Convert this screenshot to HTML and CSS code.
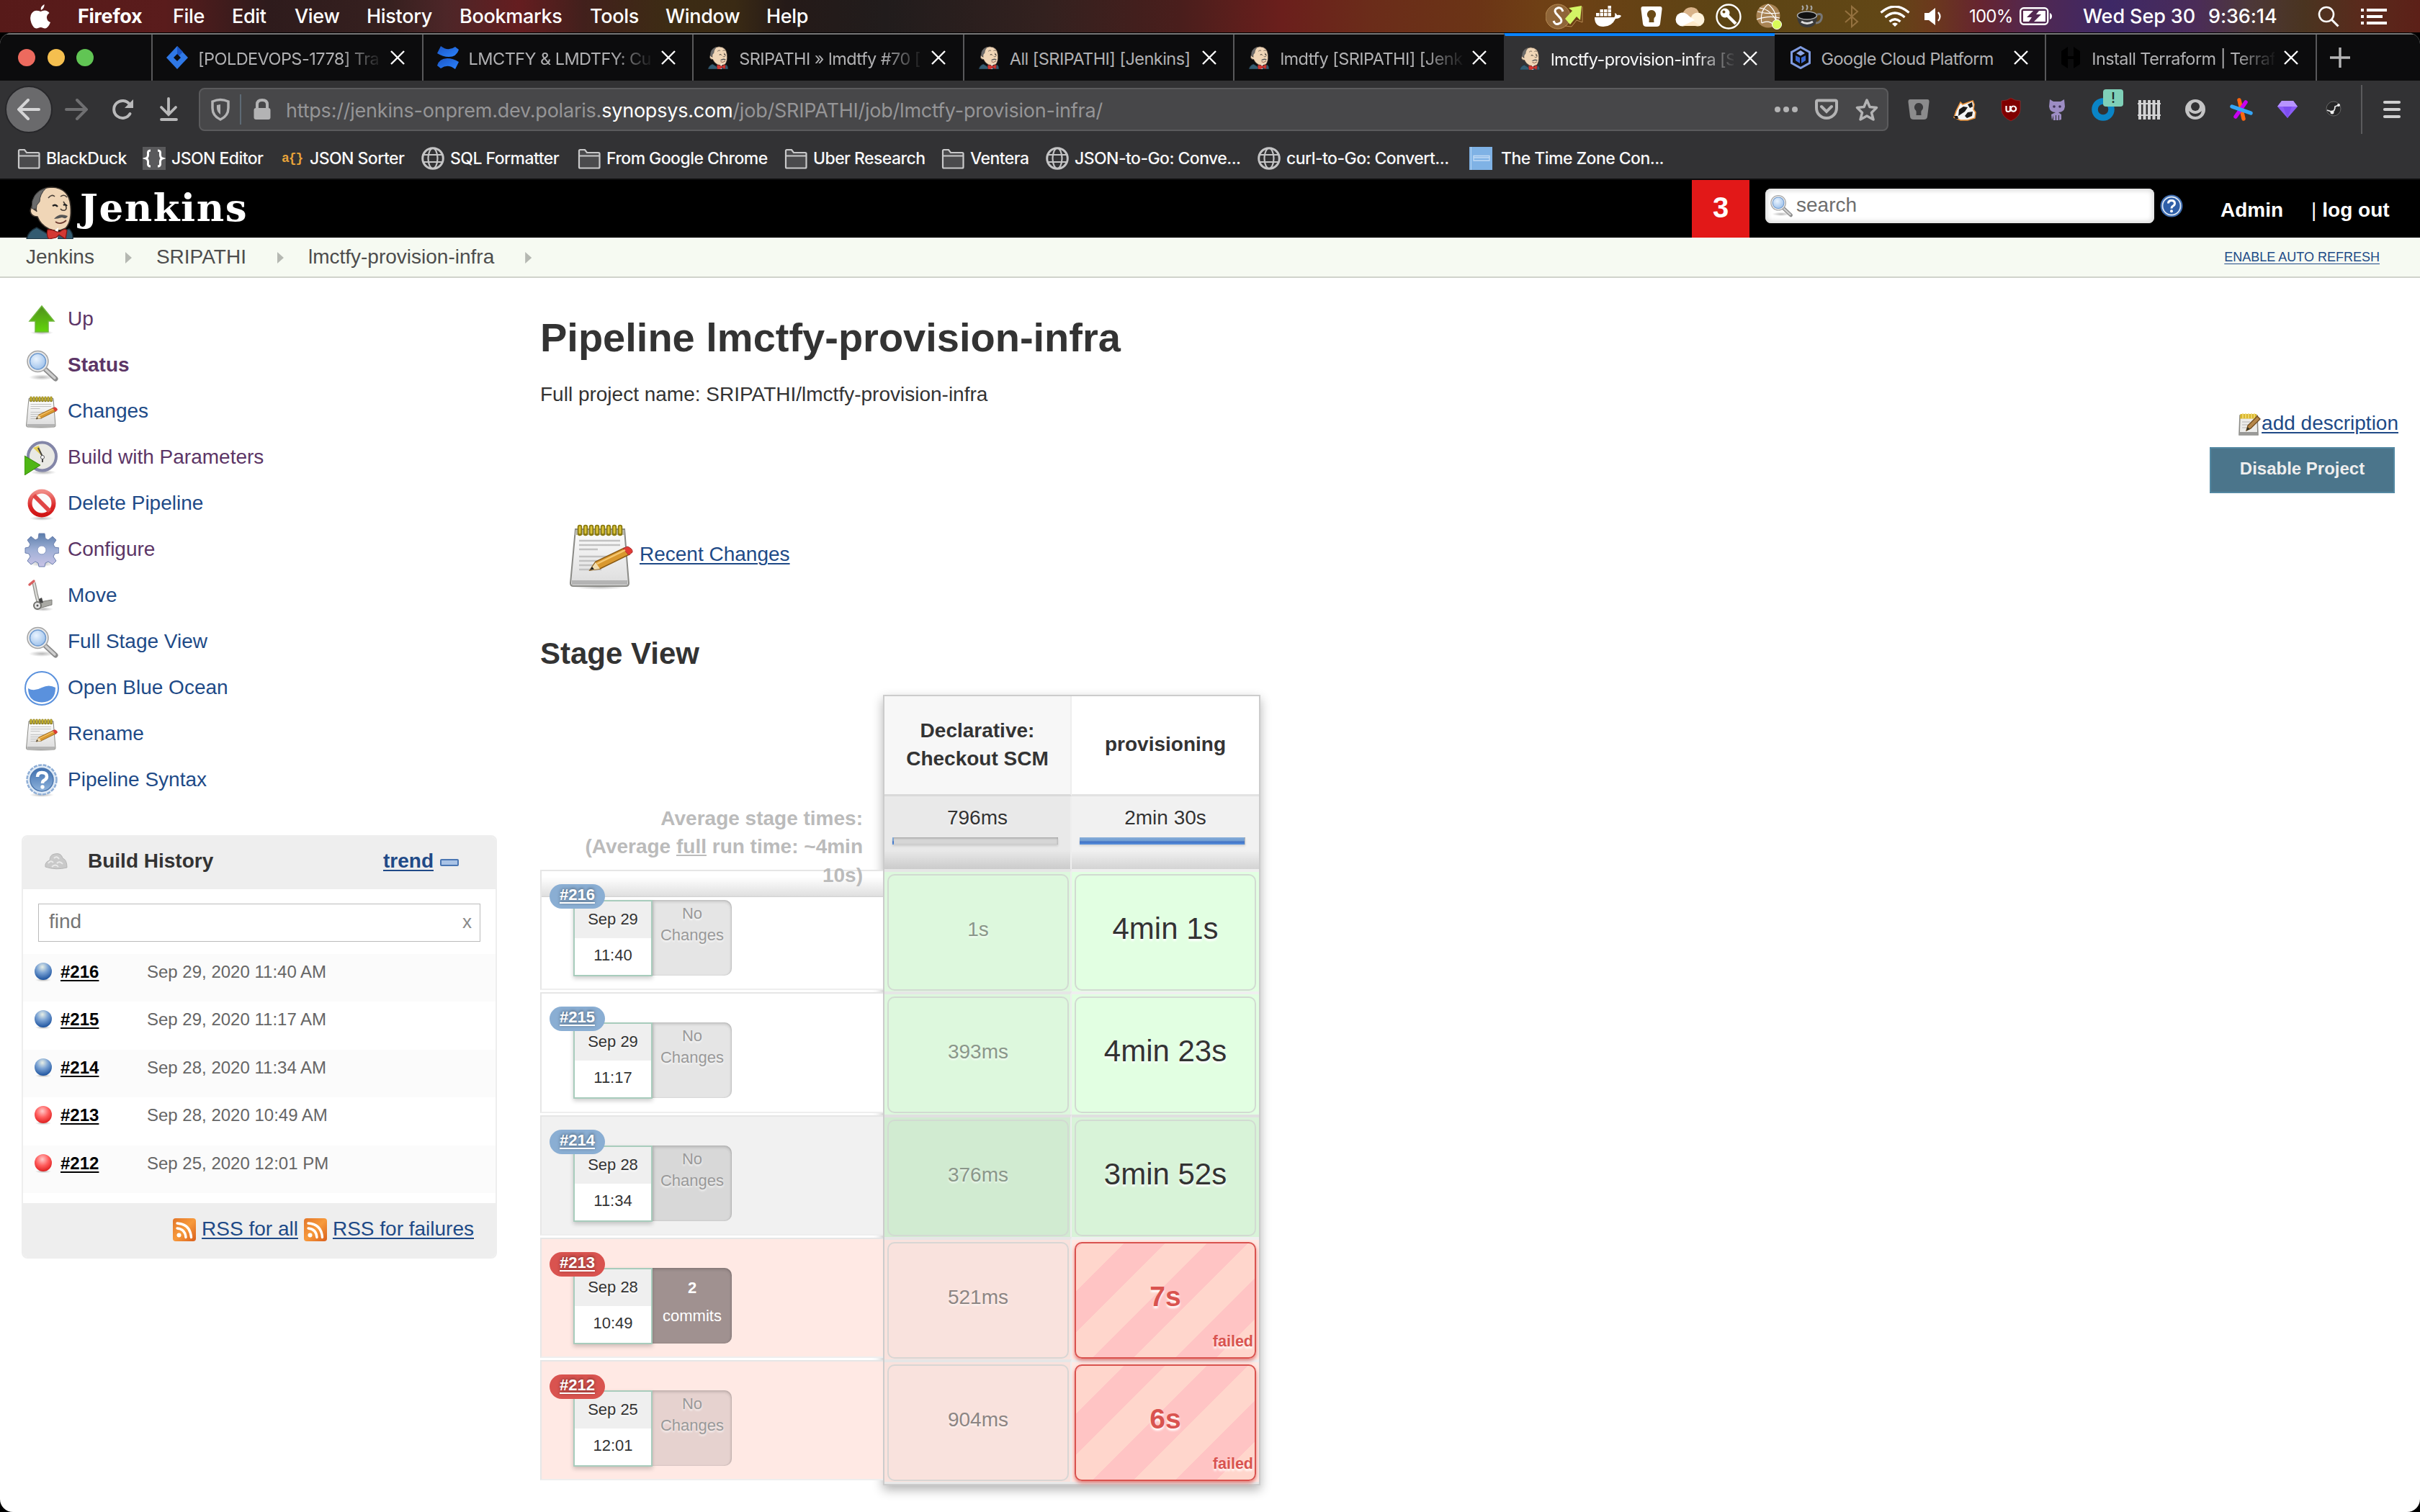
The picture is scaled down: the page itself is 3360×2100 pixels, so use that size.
FILE: index.html
```html
<!DOCTYPE html>
<html lang="en">
<head>
<meta charset="utf-8">
<title>lmctfy-provision-infra [SRIPATHI] [Jenkins]</title>
<link rel="stylesheet" href="styles.css">
</head>
<body>
<svg class="sprite" aria-hidden="true">
  <defs>
    <linearGradient id="gGreen" x1="0" y1="0" x2="0" y2="1"><stop offset="0" stop-color="#4f8f1c"/><stop offset="1" stop-color="#62d60b"/></linearGradient>
    <linearGradient id="gPaper" x1="0" y1="0" x2="0" y2="1"><stop offset="0" stop-color="#fdfdfd"/><stop offset="1" stop-color="#dcdcdc"/></linearGradient>
    <linearGradient id="gGear" x1="0" y1="0" x2="0" y2="1"><stop offset="0" stop-color="#5b7dab"/><stop offset=".5" stop-color="#9fb0d6"/><stop offset="1" stop-color="#c9c3e6"/></linearGradient>
    <linearGradient id="gRed" x1="0" y1="0" x2="0" y2="1"><stop offset="0" stop-color="#f08a85"/><stop offset=".6" stop-color="#dc2a2a"/><stop offset="1" stop-color="#d01515"/></linearGradient>
    <linearGradient id="gOrange" x1="0" y1="0" x2="1" y2="1"><stop offset="0" stop-color="#e2762a"/><stop offset=".5" stop-color="#f79a3c"/><stop offset="1" stop-color="#d95f1c"/></linearGradient>
    <linearGradient id="gHelp" x1="0" y1="0" x2="0" y2="1"><stop offset="0" stop-color="#3f6fae"/><stop offset="1" stop-color="#8fb3dc"/></linearGradient>
    <radialGradient id="gBlueBall" cx=".45" cy=".25" r=".75"><stop offset="0" stop-color="#e8efe6"/><stop offset=".45" stop-color="#7ba3d4"/><stop offset="1" stop-color="#1d539f"/></radialGradient>
    <radialGradient id="gRedBall" cx=".45" cy=".3" r=".75"><stop offset="0" stop-color="#ffc9c9"/><stop offset=".5" stop-color="#ff5c5c"/><stop offset="1" stop-color="#d91818"/></radialGradient>
    <radialGradient id="gLens" cx=".4" cy=".35" r=".7"><stop offset="0" stop-color="#eaf4ff"/><stop offset="1" stop-color="#9cc0ea"/></radialGradient>
    <radialGradient id="gShade"><stop offset="0" stop-color="#000" stop-opacity=".28"/><stop offset="1" stop-color="#000" stop-opacity="0"/></radialGradient>
    <linearGradient id="gAtl" x1="0" y1="0" x2="1" y2="1"><stop offset="0" stop-color="#1b55c4"/><stop offset="1" stop-color="#2c84ff"/></linearGradient>
  </defs>

  <symbol id="butler" viewBox="0 0 66 74">
    <path d="M1 74 Q3 63 15 58 L32 68 L60 60 Q66 66 65 74Z" fill="#335b70" stroke="#1d2f3a" stroke-width="1.5"/>
    <path d="M10 26 Q12 3 36 2 Q60 3 62 28 Q64 50 55 59 Q44 65 32 60 Q20 54 16 43 Q7 43 6 35 Q7 29 10 26Z" fill="#f0d6b7" stroke="#3b332c" stroke-width="1.6"/>
    <path d="M8 31 Q7 9 28 3 Q19 12 19 22 L15 27 L14 35Z" fill="#6b6b6b" stroke="#3b3b3b"/>
    <path d="M31 17 Q36 11 40 15 M48 15 Q53 11 57 16 M52 22 Q59 32 54 34 Q50 35 48 32 M11 33 Q14 31 15 36" fill="none" stroke="#4a4038" stroke-width="1.6"/>
    <path d="M37 28 Q41 25 44 29 M52 27 Q55 25 57 28" fill="none" stroke="#222" stroke-width="2.2"/>
    <path d="M39 46 Q46 37 58 42 Q56 47 50 44 Q44 46 39 46Z" fill="#555"/>
    <path d="M41 50 Q48 55 56 48" fill="none" stroke="#6b3a30" stroke-width="1.8"/>
    <path d="M36 65 L45 58 L44 74 L31 74 L30 61Z" fill="#fff"/>
    <path d="M30 61 Q28 70 32 74 L42 72 L46 68 L55 74 L57 62 Q54 58 47 64 L43 64 Q36 60 30 61Z" fill="#d33833" stroke="#7d1512" stroke-width="1.2"/>
  </symbol>
  <symbol id="lens" viewBox="0 0 48 48">
    <ellipse cx="24" cy="40" rx="18" ry="4" fill="url(#gShade)"/>
    <path d="M29 29 L43 42" stroke="#8b8b8b" stroke-width="7" stroke-linecap="round"/>
    <path d="M29 29 L42 41" stroke="#cfcfcf" stroke-width="3.4" stroke-linecap="round"/>
    <circle cx="18.500" cy="18" r="14.500" fill="#e9e9e9" stroke="#a3a3a3" stroke-width="1.500"/>
    <circle cx="18.500" cy="18" r="11" fill="url(#gLens)" stroke="#6f9bd0" stroke-width="1.500"/>
  </symbol>
  <symbol id="notepad" viewBox="0 0 96 96">
    <ellipse cx="46" cy="91" rx="38" ry="4" fill="url(#gShade)"/>
    <path d="M12 11 L80 11 L86 86 Q86 90 82 90 L9 90 Q5 90 5 86Z" fill="url(#gPaper)" stroke="#8a8a86" stroke-width="2"/>
    <path d="M12 12 H80 V19 H11Z" fill="#b9b9b0"/>
    <path d="M7 82 H84 V88 H7Z" fill="#b4b4b4"/>
    <path d="M17 27 H74 M17 33 H74 M17 39 H43 M17 49 H74 M17 55 H68 M17 61 H52 M17 67 H48" stroke="#c2c2c2" stroke-width="2.400"/>
    <path d="M18 8 V17 M26 8 V17 M34 8 V17 M42 8 V17 M50 8 V17 M58 8 V17 M66 8 V17 M74 8 V17" stroke="#8a7a10" stroke-width="6.500" stroke-linecap="round"/>
    <path d="M18 8 V16 M26 8 V16 M34 8 V16 M42 8 V16 M50 8 V16 M58 8 V16 M66 8 V16 M74 8 V16" stroke="#dcc53a" stroke-width="2.800" stroke-linecap="round"/>
    <path d="M32 68 L40 56 L80 37 L87 46 L46 66Z" fill="#d9982f" stroke="#8a5a14" stroke-width="1.500"/>
    <path d="M32 68 L40 57 L46 66Z" fill="#f1dcae"/><path d="M32 68 L35 63 L38 66.500Z" fill="#222"/>
    <path d="M78 38 L84 35 Q92 38 91 43 L86 47Z" fill="#e23a35" stroke="#a33" stroke-width="1"/>
    <path d="M42 59 L81 40" stroke="#f5c872" stroke-width="2.500"/>
  </symbol>
  <symbol id="notepad-small" viewBox="0 0 32 32">
    <path d="M2 4H26L27 31H1Z" fill="#ececea" stroke="#8a8a86" stroke-width="1.600"/>
    <path d="M2 27H26V31H1Z" fill="#9a9a98"/>
    <path d="M5 13H16M5 17H14M5 21H11" stroke="#c6c6c6" stroke-width="1.500"/>
    <path d="M2.500 2H25V8.500H2Z" fill="#d9b62c"/><path d="M6 1V8M10 1V8M14 1V8M18 1V8M22 1V8" stroke="#f3de7e" stroke-width="1.500"/>
    <path d="M11 25L13 18L26 5L30 9L17 22Z" fill="#b5874a" stroke="#6f4a1c" stroke-width="1.300"/><path d="M11 25L12.500 20L16 23Z" fill="#332"/>
  </symbol>
  <symbol id="up" viewBox="0 0 48 48">
    <ellipse cx="24" cy="42" rx="16" ry="3" fill="url(#gShade)"/>
    <path d="M24 5 L41 26 L33 26 L33 41 L15 41 L15 26 L7 26Z" fill="url(#gGreen)" stroke="#6fb73b" stroke-width="1.500"/>
  </symbol>
  <symbol id="clock" viewBox="0 0 48 48">
    <ellipse cx="26" cy="44" rx="18" ry="3.500" fill="url(#gShade)"/>
    <circle cx="24.500" cy="22" r="19.500" fill="#e9e9e4" stroke="#8386a8" stroke-width="4"/>
    <path d="M25 22 L12 10 L20 7Z" fill="#e6cf55"/>
    <path d="M25 22 L19 10 M25 22 L25 30" stroke="#444" stroke-width="2"/><circle cx="25" cy="23" r="2.500" fill="#fff" stroke="#555"/>
    <path d="M0 21 L22 34 L0 48Z" fill="#4fb615" stroke="#378309" stroke-width="1"/>
  </symbol>
  <symbol id="deny" viewBox="0 0 48 48">
    <ellipse cx="24" cy="44" rx="17" ry="3" fill="url(#gShade)"/>
    <circle cx="24" cy="23" r="16.500" fill="#fbfbfb" stroke="url(#gRed)" stroke-width="6"/>
    <path d="M13 12 L35 34" stroke="#e04545" stroke-width="6"/>
  </symbol>
  <symbol id="gear" viewBox="0 0 48 48">
    <ellipse cx="24" cy="43" rx="17" ry="4" fill="url(#gShade)"/>
    <path fill="url(#gGear)" stroke="#6b7fae" stroke-width="1" d="M20 1h8l1 7 4 2 6-5 5 5-4 6 2 4 6 1v7l-6 1-2 4 4 6-5 5-6-4-4 2-1 5h-8l-1-5-4-2-6 4-5-5 4-6-2-4-5-1v-7l5-1 2-4-4-6 5-5 6 5 4-2z"/>
    <circle cx="24" cy="24" r="6" fill="#fff" stroke="#8798c2"/>
  </symbol>
  <symbol id="move" viewBox="0 0 48 48">
    <ellipse cx="26" cy="42" rx="14" ry="3" fill="url(#gShade)"/>
    <path d="M13 5 L16 20 L20 36" fill="none" stroke="#8f8f8b" stroke-width="5"/>
    <path d="M13 5 L16 20 L20 36" fill="none" stroke="#dcdcd8" stroke-width="2.500"/>
    <path d="M7 8 L13 3" stroke="#d96060" stroke-width="3.500" stroke-linecap="round"/>
    <path d="M22 32 L38 29 L38 36 L20 41Z" fill="#a9a9a4" stroke="#7d7d79"/>
    <path d="M20 28 L24 26 L26 33 L21 34Z" fill="#444"/>
    <circle cx="18" cy="37" r="5" fill="#e5e5e5" stroke="#6f6f6b" stroke-width="2"/><circle cx="18" cy="37" r="1.500" fill="#555"/>
  </symbol>
  <symbol id="ocean" viewBox="0 0 48 48">
    <circle cx="24" cy="24" r="23" fill="#fff" stroke="#5a91dd" stroke-width="2"/>
    <path d="M5 24 Q13 29 24 23 Q34 18 43 23 Q43 43 24 43.500 Q5 43 5 24Z" fill="#5a91dd"/>
  </symbol>
  <symbol id="help" viewBox="0 0 48 48">
    <ellipse cx="24" cy="44" rx="17" ry="3" fill="url(#gShade)"/>
    <circle cx="24" cy="23" r="20.500" fill="#dfeaf6" stroke="#8eaed6" stroke-width="2.500" stroke-dasharray="5 1.500"/>
    <circle cx="24" cy="23" r="16" fill="url(#gHelp)" stroke="#4b76ae" stroke-width="1.500"/>
    <path d="M18 19 Q18 13 24 13 Q31 13 31 18.500 Q31 22 27 24 Q25 25 25 28" fill="none" stroke="#fff" stroke-width="4.500"/><circle cx="25" cy="33" r="2.700" fill="#fff"/>
  </symbol>
  <symbol id="help-small" viewBox="0 0 32 32">
    <circle cx="16" cy="16" r="14.500" fill="#2f5fa8" stroke="#3e6cb0" stroke-width="2"/><circle cx="16" cy="16" r="12.500" fill="none" stroke="#dbe7f5" stroke-width="1.800"/>
    <path d="M11.500 12.500Q11.500 8.500 16 8.500Q20.500 8.500 20.500 12.500Q20.500 15 17.500 16.500Q16 17.500 16 19.500" fill="none" stroke="#fff" stroke-width="3"/><circle cx="16" cy="23.300" r="2" fill="#fff"/>
  </symbol>
  <symbol id="rss" viewBox="0 0 32 32">
    <rect width="32" height="32" rx="4" fill="url(#gOrange)"/>
    <circle cx="8.500" cy="23.500" r="3" fill="#fff"/>
    <path d="M6 14 Q17 15 18 26.500 M6 7 Q24 8 25.500 26.500" fill="none" stroke="#fff" stroke-width="3.400" stroke-linecap="round"/>
  </symbol>
  <symbol id="ball-blue" viewBox="0 0 28 28"><ellipse cx="14" cy="25" rx="11" ry="2.500" fill="url(#gShade)"/><circle cx="14" cy="13" r="12" fill="url(#gBlueBall)"/></symbol>
  <symbol id="ball-red" viewBox="0 0 28 28"><ellipse cx="14" cy="25" rx="11" ry="2.500" fill="url(#gShade)"/><circle cx="14" cy="13" r="12" fill="url(#gRedBall)"/></symbol>
  <symbol id="folder" viewBox="0 0 32 32"><path d="M2 28V5.500Q2 4 3.500 4H10l3 4h16q1.500 0 1.500 1.500V28q0 1.500-1.500 1.500H3.500Q2 29.500 2 28Z" fill="#4b4b4d" stroke="#c9c9ca" stroke-width="2.200"/><path d="M2 12.500H30" stroke="#c9c9ca" stroke-width="2"/></symbol>
  <symbol id="globe" viewBox="0 0 32 32"><g fill="none" stroke="#c4c4c5" stroke-width="2.200"><circle cx="16" cy="16" r="14.300" stroke-width="3"/><ellipse cx="16" cy="16" rx="6.500" ry="14"/><path d="M3 11H29M3 21H29"/></g></symbol>
  <symbol id="close" viewBox="0 0 20 20"><path d="M1 1L19 19M19 1L1 19" stroke="currentColor" stroke-width="2.400"/></symbol>
  <symbol id="onepw" viewBox="0 0 32 30"><path d="M4 1H28Q31 1 30.500 5L28 25Q27.500 29 23 29H9Q4.500 29 4 25L1.500 5Q1 1 4 1Z" fill="currentColor"/><path d="M16 6a6 6 0 0 0-4 10.500q1 1 .5 6.500h7q-.5-5.500.5-6.500A6 6 0 0 0 16 6Z" class="hole"/></symbol>
</svg>

<header class="menubar">
  <svg class="apple" viewBox="0 0 28 34"><path fill="#fff" d="M19.500 0Q20 5 15 8Q13.500 3.500 19.500 0ZM14.500 10Q17 8.500 20 8.500Q24 8.500 26.500 12Q22.500 15 23 19Q23.500 23.500 28 25Q24.500 33.500 20.500 33.500Q19 33.500 17.500 32.700T14.500 32T11.500 32.700T8.500 33.500Q4.500 33.500 1.500 26Q-1.500 17.500 2 12.500Q4.500 8.700 8.500 8.700Q11.500 8.700 14.500 10Z"/></svg>
  <nav class="menus">
    <b>Firefox</b><span>File</span><span>Edit</span><span>View</span><span>History</span><span>Bookmarks</span><span>Tools</span><span>Window</span><span>Help</span>
  </nav>
  <div class="tray">
    <svg width="54" height="38" viewBox="0 0 54 38"><circle cx="17" cy="19" r="17" fill="#8f6538" stroke="#b98c55"/><path d="M24 12Q22 6 17 7Q11 9 14 14L21 22Q24 27 18 29Q13 31 11 25" fill="none" stroke="#fff" stroke-width="3"/><path d="M32 7L50 4L48 24L43 19L34 30L27 22L37 11Z" fill="#d3f565"/><path d="M51 5V27L43 24L36 33L27 32" fill="none" stroke="#b98c55"/></svg>
    <svg width="38" height="30" viewBox="0 0 38 30"><path fill="#fff" d="M0 16H27Q29 15 28 10Q31 11 31 13Q35 12 37 14Q35 18 29 18Q24 29 12 29Q0 29 0 16ZM2 10h4.500v4.500H2zM7.500 10H12v4.500H7.500zM13 10h4.500v4.500H13zM18.500 10H23v4.500h-4.500zM7.500 5H12v4.300H7.500zM13 5h4.500v4.300H13zM18.500 5H23v4.300h-4.500zM18.500 0H23v4.300h-4.500z"/></svg>
    <svg class="tray-pw" width="32" height="30"><use href="#onepw"/></svg>
    <svg width="42" height="28" viewBox="0 0 42 28"><path d="M10 11Q13 1 22 1Q32 1 33 11L24 18Z" fill="#d9b38a"/><circle cx="10" cy="18" r="9.500" fill="#fff"/><circle cx="31" cy="18" r="9.500" fill="#fff3dc"/><path d="M10 12L36 27H10Z" fill="#ffe9c9"/><path d="M7 9Q14 8 20 14L27 19L10 27H8Z" fill="#fff"/></svg>
    <svg width="36" height="36" viewBox="0 0 36 36"><circle cx="18" cy="18" r="16.500" fill="none" stroke="#fff" stroke-width="2.400"/><circle cx="13" cy="13" r="6.500" fill="#fff"/><circle cx="11.500" cy="11.500" r="2" fill="#6a4a16"/><path d="M16 16L28 28" stroke="#fff" stroke-width="4.500"/></svg>
    <svg width="36" height="36" viewBox="0 0 36 36"><circle cx="17" cy="17" r="16.500" fill="#a98455"/><path d="M17 1Q5 10 8 27M17 1Q31 12 27 30M2 11Q16 15 33 13M1 22Q18 16 33 20M8 27Q18 22 27 31M5 6Q22 8 30 28" fill="none" stroke="#fff" stroke-width="1.200"/><circle cx="29" cy="29" r="6.500" fill="#d9fb58" stroke="#fff"/></svg>
    <svg width="38" height="34" viewBox="0 0 38 34"><path d="M8 2Q11 5 8 8M14 1Q17 4 14 8M20 2Q23 5 20 8" fill="none" stroke="#aaa" stroke-width="2"/><path d="M1 16H29Q29 32 15 32Q2 32 1 16Z" fill="#3a3a3a"/><ellipse cx="15" cy="15.500" rx="13.500" ry="5.500" fill="#111" stroke="#aaa" stroke-width="1.500"/><path d="M7 24Q15 29 23 24" stroke="#ddd" stroke-width="3" fill="none"/><path d="M29 14Q37 12 35 20Q33 26 27 26" fill="none" stroke="#777" stroke-width="3"/></svg>
    <svg width="20" height="32" viewBox="0 0 20 32"><path d="M1 8L18 23L10 30V2L18 9L1 24" fill="none" stroke="#94713f" stroke-width="2"/></svg>
    <svg width="42" height="30" viewBox="0 0 42 30"><g fill="none" stroke="#fff" stroke-width="3.200"><path d="M1.500 9.500Q21-7.500 40.500 9.500M7.500 16Q21 4 34.500 16M13.500 22Q21 15.500 28.500 22"/></g><path d="M21 29L17 25Q21 22 25 25Z" fill="#fff"/></svg>
    <svg width="28" height="26" viewBox="0 0 28 26"><path d="M0 8H6L15 1V25L6 18H0Z" fill="#fff"/><path d="M19 7Q24 13 19 19" fill="none" stroke="#fff" stroke-width="2.200"/></svg>
    <span class="pct">100%</span>
    <svg width="46" height="26" viewBox="0 0 46 26"><rect x="1.200" y="1.200" width="38" height="22.500" rx="4.500" fill="none" stroke="#fff" stroke-width="2.400"/><path d="M42 8Q45 9 45 12.500T42 17Z" fill="#fff"/><path d="M5 5H19L10 14H17L13 20H5ZM27 5H36V20H20L30 10H23Z" fill="#fff"/></svg>
    <span class="clock">Wed Sep 30</span><span class="clock time">9:36:14</span>
    <svg width="30" height="30" viewBox="0 0 30 30"><circle cx="12" cy="12" r="10" fill="none" stroke="#fff" stroke-width="2.600"/><path d="M19 19L28.500 28.500" stroke="#fff" stroke-width="3"/></svg>
    <svg width="36" height="22" viewBox="0 0 36 22"><path d="M0 2H4M0 11H4M0 20H4M8 2H36M8 11H30M8 20H36" stroke="#fff" stroke-width="3.800"/></svg>
  </div>
</header>

<div class="window">
  <div class="tabstrip">
    <div class="lights"><i class="red"></i><i class="yellow"></i><i class="green"></i></div>
    <div class="tab"><svg class="fav" viewBox="0 0 32 32"><path d="M16 0L31 16L16 32L1 16Z" fill="#2f78e6"/><path d="M16 0L24 8L16 16Z" fill="#1b55c4"/><path d="M16 11L21 16L16 21L11 16Z" fill="#0c0c0d"/></svg><span>[POLDEVOPS-1778] Tra</span><svg class="x"><use href="#close"/></svg></div>
    <div class="tab"><svg class="fav" viewBox="0 0 32 32"><path d="M1 10L6 0Q16 8 26 1L31 5Q28 15 17 15Q9 15 1 10Z" fill="url(#gAtl)"/><path d="M31 22L26 32Q16 24 6 31L1 27Q4 17 15 17Q23 17 31 22Z" fill="url(#gAtl)"/></svg><span>LMCTFY &amp; LMDTFY: Cur</span><svg class="x"><use href="#close"/></svg></div>
    <div class="tab"><svg class="fav"><use href="#butler"/></svg><span>SRIPATHI » lmdtfy #70 [</span><svg class="x"><use href="#close"/></svg></div>
    <div class="tab"><svg class="fav"><use href="#butler"/></svg><span class="whole">All [SRIPATHI] [Jenkins]</span><svg class="x"><use href="#close"/></svg></div>
    <div class="tab"><svg class="fav"><use href="#butler"/></svg><span>lmdtfy [SRIPATHI] [Jenk</span><svg class="x"><use href="#close"/></svg></div>
    <div class="tab active"><svg class="fav"><use href="#butler"/></svg><span>lmctfy-provision-infra [S</span><svg class="x"><use href="#close"/></svg></div>
    <div class="tab after"><svg class="fav" viewBox="0 0 32 32"><path d="M16 1.500L28.500 8.500V23.500L16 30.500L3.500 23.500V8.500Z" fill="none" stroke="#7f9be0" stroke-width="3"/><path d="M16 6L22 10L16 13.500L10 10Z" fill="#8fa8e8"/><path d="M9 13L15 16V24L9 20ZM23 13L17 16V24L23 20Z" fill="#3c68d0"/></svg><span class="whole">Google Cloud Platform</span><svg class="x"><use href="#close"/></svg></div>
    <div class="tab"><svg class="fav" viewBox="0 0 32 32"><path d="M12 1V31L3 25V7ZM20 31V1L29 7V25ZM12 14H20V18H12Z" fill="#000"/></svg><span>Install Terraform | Terraf</span><svg class="x"><use href="#close"/></svg></div>
    <div class="newtab"><svg width="28" height="28" viewBox="0 0 28 28"><path d="M14 0V28M0 14H28" stroke="#b5b5b6" stroke-width="3.400"/></svg></div>
  </div>

  <div class="navbar">
    <div class="back"><svg width="32" height="30" viewBox="0 0 32 30"><path d="M30 15H3M15 2L2 15L15 28" fill="none" stroke="#d5d5d6" stroke-width="4" stroke-linecap="round"/></svg></div>
    <svg class="fwd" width="32" height="30" viewBox="0 0 32 30"><path d="M2 15H29M17 2L30 15L17 28" fill="none" stroke="#6f6f71" stroke-width="4" stroke-linecap="round"/></svg>
    <svg class="reload" width="32" height="32" viewBox="0 0 32 32"><path d="M25.500 22A12 12 0 1 1 25 9" fill="none" stroke="#b9b9ba" stroke-width="4" stroke-linecap="round"/><path d="M30 2V14H18Z" fill="#b9b9ba"/></svg>
    <svg class="dl" width="32" height="34" viewBox="0 0 32 34"><path d="M16 2V24M6 14L16 24L26 14M6 31H27" fill="none" stroke="#b9b9ba" stroke-width="3.800" stroke-linecap="round"/></svg>
    <div class="urlbar">
      <svg width="32" height="32" viewBox="0 0 32 32"><path d="M5 5Q16 0 27 5V14Q27 25 16 30Q5 25 5 14Z" fill="none" stroke="#b3b3b4" stroke-width="3.500"/><path d="M16 9V23Q11 19 11 14V10Z" fill="#b3b3b4"/></svg>
      <i class="bar"></i>
      <svg width="32" height="32" viewBox="0 0 32 32"><path d="M9 15V9Q9 3 16 3Q23 3 23 9V15" fill="none" stroke="#b3b3b4" stroke-width="4"/><rect x="4.500" y="14" width="23" height="16" rx="3" fill="#b3b3b4"/></svg>
      <span class="url">https://jenkins-onprem.dev.polaris.<b>synopsys.com</b>/job/SRIPATHI/job/lmctfy-provision-infra/</span>
      <svg width="32" height="32" viewBox="0 0 32 32"><g fill="#b3b3b4"><circle cx="4" cy="16" r="4"/><circle cx="16" cy="16" r="4"/><circle cx="28" cy="16" r="4"/></g></svg>
      <svg width="32" height="32" viewBox="0 0 32 32"><path d="M4 3.500H28Q30 3.500 30 5.500V14A14 14 0 0 1 2 14V5.500Q2 3.500 4 3.500Z" fill="none" stroke="#b3b3b4" stroke-width="4"/><path d="M9 12L16 19L23 12" fill="none" stroke="#b3b3b4" stroke-width="4" stroke-linecap="round"/></svg>
      <svg width="32" height="32" viewBox="0 0 32 32"><path d="M16 3L20 12.500L29.500 13.500L22.500 20.500L25 30L16 25L7 30L9.500 20.500L2.500 13.500L12 12.500Z" fill="none" stroke="#b3b3b4" stroke-width="3.500" stroke-linejoin="round"/></svg>
    </div>
    <div class="exts">
      <svg class="ext-pw"><use href="#onepw"/></svg>
      <svg viewBox="0 0 32 32"><path d="M1 27L4 18L10 6L13 9L21 6L27 4L29 9L28 16L31 20L30 28L20 31L10 31Z" fill="#f4f4f4" stroke="#e8913a" stroke-width="1.600"/><path d="M8 16L14 12L20 13L16 19L7 25ZM20 9L26 6L27 12L23 14ZM20 20L27 19L26 25L19 28L16 25ZM1 25H6L7 29L3 29Z" fill="#1b1b1b"/></svg>
      <svg viewBox="0 0 32 32"><path d="M16 0Q21 4 29 4V16Q29 26 16 32Q3 26 3 16V4Q11 4 16 0Z" fill="#800000" stroke="#a33" stroke-width=".6"/><path d="M9.500 11V16.500Q9.500 19 12 19T15 17V11V19M19.500 11.500A3.600 3.600 0 1 0 19.600 11.500" fill="none" stroke="#fff" stroke-width="2.200"/></svg>
      <svg viewBox="0 0 32 32"><path d="M6 2L11 5H21L26 2L27 12Q26 20 18 20L22 23V30L19 31V24H18V31H15V24H14V31H11V24L9 31L8 23L14 20Q6 20 5 12Z" fill="#9d8dc4"/><circle cx="12" cy="12" r="1.800" fill="#3f3356"/><circle cx="20" cy="12" r="1.800" fill="#3f3356"/></svg>
      <div class="ext-badge"><svg viewBox="0 0 32 32"><circle cx="16" cy="16" r="11.500" fill="none" stroke="#0a84c6" stroke-width="8.500"/></svg><b>!</b></div>
      <svg viewBox="0 0 32 32"><path d="M3 3V30M9.500 3V30M16 3V30M22.500 3V30M29 3V30" stroke="#d3d3d4" stroke-width="4"/><path d="M0 8H32M0 24H32" stroke="#d3d3d4" stroke-width="2.200"/></svg>
      <svg viewBox="0 0 32 32"><circle cx="16" cy="16" r="14" fill="#c4c4c5"/><circle cx="16" cy="12" r="6" fill="#323234"/><path d="M7 18Q16 26 25 18Q23 26 16 26T7 18Z" fill="#323234"/></svg>
      <svg viewBox="0 0 32 32"><g stroke-width="5.500" stroke-linecap="round"><path d="M13 3L19 29" stroke="#ff6611"/><path d="M22 6L8 26" stroke="#c800f0"/><path d="M3 12L29 21" stroke="#35a5f5"/></g></svg>
      <svg viewBox="0 0 32 32"><path d="M8 4H24L30 12L16 28L2 12Z" fill="#8b5cf6"/><path d="M2 12H30L24 4H8Z" fill="#b794ff"/><path d="M10 12H22L16 28Z" fill="#7c4df0"/></svg>
      <svg viewBox="0 0 32 32"><circle cx="16" cy="15" r="10" fill="#262627" stroke="#666"/><path d="M7 17L13 19Q18 19 18 12L23 10" fill="none" stroke="#e5e5e5" stroke-width="1.800"/><circle cx="14" cy="20" r="2.500" fill="#eee"/><circle cx="23" cy="10" r="2" fill="#eee"/></svg>
    </div>
    <i class="navsep"></i>
    <svg class="burger" width="32" height="32" viewBox="0 0 32 32"><path d="M6 6H26M6 16H26M6 26H26" stroke="#cfcfd0" stroke-width="4.200" stroke-linecap="round"/></svg>
  </div>

  <div class="bookmarks">
    <span><svg><use href="#folder"/></svg>BlackDuck</span>
    <span><svg viewBox="0 0 32 32"><rect width="32" height="32" fill="#5a5a5c"/><path d="M11 5Q7 5 7.500 9Q8 15 4.500 16Q8 17 7.500 23Q7 27 11 27M21 5Q25 5 24.500 9Q24 15 27.500 16Q24 17 24.500 23Q25 27 21 27" fill="none" stroke="#fff" stroke-width="3"/></svg>JSON Editor</span>
    <span><svg viewBox="0 0 32 32"><text x="1" y="21" class="abr">a{}</text></svg>JSON Sorter</span>
    <span><svg><use href="#globe"/></svg>SQL Formatter</span>
    <span><svg><use href="#folder"/></svg>From Google Chrome</span>
    <span><svg><use href="#folder"/></svg>Uber Research</span>
    <span><svg><use href="#folder"/></svg>Ventera</span>
    <span><svg><use href="#globe"/></svg>JSON-to-Go: Conve...</span>
    <span><svg><use href="#globe"/></svg>curl-to-Go: Convert...</span>
    <span class="tz"><svg viewBox="0 0 32 32"><rect width="32" height="32" fill="#7fb2e5"/><path d="M2.500 0V32" stroke="#b5d5f4"/><path d="M6 12.500H28V19H6ZM6 15H28" fill="none" stroke="#c3dcf5" stroke-width="1.300"/></svg>The Time Zone Con...</span>
  </div>

  <main class="page">
    <div class="jheader">
      <svg class="face"><use href="#butler"/></svg>
      <span class="brand">Jenkins</span>
      <span class="alerts">3</span>
      <div class="search"><svg><use href="#lens"/></svg>search</div>
      <svg class="hhelp"><use href="#help-small"/></svg>
      <b class="admin">Admin</b>
      <b class="logout"><i>|</i>log out</b>
    </div>
    <div class="crumbs">
      <span>Jenkins</span><i></i><span>SRIPATHI</span><i></i><span>lmctfy-provision-infra</span><i></i>
      <a class="refresh">ENABLE AUTO REFRESH</a>
    </div>

    <div class="body">
      <aside class="side">
        <ul class="tasks">
          <li class="seen"><svg><use href="#up"/></svg>Up</li>
          <li class="seen cur"><svg><use href="#lens"/></svg>Status</li>
          <li><svg><use href="#notepad"/></svg>Changes</li>
          <li class="seen"><svg><use href="#clock"/></svg>Build with Parameters</li>
          <li><svg><use href="#deny"/></svg>Delete Pipeline</li>
          <li class="seen"><svg><use href="#gear"/></svg>Configure</li>
          <li><svg><use href="#move"/></svg>Move</li>
          <li><svg><use href="#lens"/></svg>Full Stage View</li>
          <li><svg><use href="#ocean"/></svg>Open Blue Ocean</li>
          <li><svg><use href="#notepad"/></svg>Rename</li>
          <li><svg><use href="#help"/></svg>Pipeline Syntax</li>
        </ul>
        <section class="history">
          <div class="hhead">
            <svg width="32" height="24" viewBox="0 0 32 24"><path d="M1 20Q0 13 7 11Q7 3 14 2Q23 0 25 8Q31 10 31 21Q16 25 1 20Z" fill="#c9c9c9" stroke="#b5b5b5"/><path d="M5 15Q8 10 12 14M13 8Q17 4 20 9M17 15Q21 11 25 16M10 20Q15 15 19 20" fill="none" stroke="#e9e9e9" stroke-width="2"/></svg>
            <b>Build History</b><a>trend</a><i></i>
          </div>
          <div class="find"><span>find</span><em>x</em></div>
          <ul class="builds">
            <li><svg><use href="#ball-blue"/></svg><b>#216</b><span>Sep 29, 2020 11:40 AM</span></li>
            <li><svg><use href="#ball-blue"/></svg><b>#215</b><span>Sep 29, 2020 11:17 AM</span></li>
            <li><svg><use href="#ball-blue"/></svg><b>#214</b><span>Sep 28, 2020 11:34 AM</span></li>
            <li><svg><use href="#ball-red"/></svg><b>#213</b><span>Sep 28, 2020 10:49 AM</span></li>
            <li><svg><use href="#ball-red"/></svg><b>#212</b><span>Sep 25, 2020 12:01 PM</span></li>
          </ul>
          <div class="hfoot"><svg><use href="#rss"/></svg><a>RSS for all</a><svg><use href="#rss"/></svg><a>RSS for failures</a></div>
        </section>
      </aside>

      <section class="content">
        <div class="intro">
          <div class="titles">
            <h1>Pipeline lmctfy-provision-infra</h1>
            <p>Full project name: SRIPATHI/lmctfy-provision-infra</p>
          </div>
          <div class="actions">
            <div class="adddesc"><svg><use href="#notepad-small"/></svg><a>add description</a></div>
            <button class="disable">Disable Project</button>
          </div>
        </div>
        <div class="recent"><svg><use href="#notepad"/></svg><a>Recent Changes</a></div>
        <h2>Stage View</h2>

        <div class="stages">
          <div class="runs">
            <div class="avglabel">Average stage times:<br>(Average <u>full</u> run time: ~4min<br>10s)</div>
            <div class="run first"><b class="num">#216</b><div class="date"><span>Sep 29</span><span>11:40</span></div><div class="chg">No<br>Changes</div></div>
            <div class="run"><b class="num">#215</b><div class="date"><span>Sep 29</span><span>11:17</span></div><div class="chg">No<br>Changes</div></div>
            <div class="run hover"><b class="num">#214</b><div class="date"><span>Sep 28</span><span>11:34</span></div><div class="chg">No<br>Changes</div></div>
            <div class="run bad"><b class="num">#213</b><div class="date"><span>Sep 28</span><span>10:49</span></div><div class="chg commits"><b>2</b><br>commits</div></div>
            <div class="run bad"><b class="num">#212</b><div class="date"><span>Sep 25</span><span>12:01</span></div><div class="chg">No<br>Changes</div></div>
          </div>
          <div class="grid">
            <div class="th alt">Declarative:<br>Checkout SCM</div><div class="th">provisioning</div>
            <div class="avg alt">796ms<i><s style="width:1%"></s></i></div><div class="avg">2min 30s<i><s style="width:99.5%"></s></i></div>
            <div class="td ok alt"><div>1s</div></div><div class="td ok"><div>4min 1s</div></div>
            <div class="td ok alt"><div>393ms</div></div><div class="td ok"><div>4min 23s</div></div>
            <div class="td ok alt hov"><div>376ms</div></div><div class="td ok hov"><div>3min 52s</div></div>
            <div class="td ko alt"><div>521ms</div></div><div class="td ko fail"><div>7s<em>failed</em></div></div>
            <div class="td ko alt"><div>904ms</div></div><div class="td ko fail"><div>6s<em>failed</em></div></div>
          </div>
        </div>
      </section>
    </div>
  </main>
</div>
</body>
</html>
```
FILE: styles.css
```css
* { box-sizing: border-box; }
body { margin: 0; width: 3360px; height: 2100px; overflow: hidden; background: #000; font-family: Inter, sans-serif; }
svg { display: block; flex: none; }
i, em { font-style: normal; }
b { font-weight: 700; }
ul { list-style: none; margin: 0; padding: 0; }
.sprite { position: absolute; width: 0; height: 0; }

/* macOS menu bar */
.menubar { height: 45px; display: flex; align-items: center; color: #fff; padding-left: 42px; font-size: 27px; font-weight: 500;
  background: linear-gradient(90deg, #571a19 0, #5a1c1c 230px, #2e1b1c 370px, #36201f 540px, #4d2628 620px, #651d20 720px, #42201c 810px, #3d2c14 930px, #3a2a14 1020px, #251a18 1090px, #211c1c 1230px, #33211f 1450px, #4a1e1c 1640px, #6b1f1c 1780px, #6b2c1a 1900px, #6b3416 2050px, #6f4015 2140px, #5c4414 2400px, #624716 2620px, #6b3a1c 2680px, #662430 2750px, #522850 2820px, #3d2866 2930px, #4b2c58 3050px, #4d383a 3120px, #4a3420 3200px, #5a2a1c 3280px, #5c2018 3360px); }
.apple { width: 28px; height: 34px; }
.menus { display: grid; grid-template-columns: 132px 82px 87px 100px 129px 181px 105px 140px 100px; margin-left: 38px; width: 2038px; letter-spacing: -.3px; line-height: 44px; }
.tray { display: grid; align-items: center; grid-template-columns: 68px 63px 49px 56px 56px 56px 67px 49px 62px 62px 70px 88px 174px 152px 60px 40px; color: #fff; }
.tray-pw { color: #fff; fill: #6a4a16; }
.hole { fill: inherit; }
.pct { font-size: 24px; letter-spacing: -.8px; font-weight: 400; }
.clock { white-space: nowrap; letter-spacing: -.1px; }

/* browser window */
.window { height: 2055px; border-radius: 16px 16px 18px 18px; overflow: hidden; background: #fff; border-top: 1px solid #000; }
.tabstrip { height: 66px; background: #0c0c0d; border-top: 2px solid #777; display: flex; align-items: stretch; }
.lights { width: 210px; display: flex; align-items: center; gap: 16.500px; padding-left: 25px; }
.lights i { width: 24px; height: 24px; border-radius: 50%; }
.lights .red { background: #ed6a5e; }
.lights .yellow { background: #f5bf4f; }
.lights .green { background: #61c554; }
.tab { width: 375.600px; border-left: 2px solid #58585a; display: flex; align-items: center; padding-left: 18px; color: #fff; }
.tab .fav { width: 32px; height: 32px; margin-right: 13px; }
.tab span { width: 254px; white-space: nowrap; font-size: 23.500px; color: #b1b1b3; margin: 2px 13px 0 0; letter-spacing: -.55px; -webkit-mask-image: linear-gradient(90deg, #000 200px, transparent 258px); mask-image: linear-gradient(90deg, #000 200px, transparent 258px); }
.tab span.whole { -webkit-mask-image: none; mask-image: none; }
.tab .x { width: 20px; height: 20px; }
.tab.active { background: #323234; margin-top: -2px; border-top: 4px solid #0a84ff; border-left-color: #323234; z-index: 1; }
.tab.active span { color: #f9f9fa; }
.tab.after { border-left-color: #0c0c0d; }
.newtab { border-left: 2px solid #58585a; padding: 0 0 0 18px; display: flex; align-items: center; }

.navbar { height: 80px; background: #323234; display: flex; align-items: center; padding-left: 7px; }
.back { width: 66px; height: 66px; border-radius: 50%; background: #6a6a6c; border: 2px solid #27272a; display: grid; place-items: center; }
.fwd { margin-left: 17px; }
.reload { margin-left: 33px; }
.dl { margin-left: 31px; }
.urlbar { width: 2346px; height: 60px; margin-left: 26px; background: #474749; border: 2px solid #5b5b5d; border-radius: 8px; display: flex; align-items: center; padding: 0 12px; }
.urlbar .bar { width: 2px; height: 42px; background: #5d6a75; margin: 0 13px 0 11px; }
.url { flex: 1; margin: 2px 0 0 17px; font-size: 27px; color: #959597; white-space: nowrap; letter-spacing: -.22px; }
.url b { font-weight: 400; color: #fff; }
.urlbar .url ~ svg + svg { margin-left: 24px; }
.exts { display: flex; gap: 32px; margin-left: 26px; }
.exts svg { width: 32px; height: 32px; }
.ext-pw { color: #8b8b8c; fill: #3a3a3c; }
.ext-badge { position: relative; }
.ext-badge b { position: absolute; left: 16px; top: -12px; width: 28px; height: 24px; background: #7fd0b8; border-radius: 4px; color: #1c2b27; font-size: 20px; font-weight: 500; line-height: 24px; text-align: center; }
.navsep { width: 2px; height: 68px; background: #5a5a5c; margin-left: 22px; }
.burger { margin-left: 25px; }

.bookmarks { height: 58px; background: #323234; border-bottom: 2px solid #0c0c0d; display: grid; grid-template-columns: 174px 192px 195px 217px 287px 218px 145px 294px 294px 300px; padding-left: 24px; color: #f9f9fa; font-size: 23px; letter-spacing: -.55px; font-weight: 500; }
.bookmarks span { display: flex; align-items: center; gap: 8px; white-space: nowrap; }
.bookmarks svg { width: 32px; height: 32px; }
.bookmarks .tz { gap: 12px; }
.abr { font: 700 18px "Liberation Mono", monospace; fill: #e8a33a; letter-spacing: -1px; }

/* Jenkins page */
.page { font-family: "Liberation Sans", Arial, sans-serif; font-size: 28px; color: #333; }
.page a { color: #204a87; text-decoration: underline; text-decoration-thickness: 2px; text-underline-offset: 3px; }
.jheader { height: 80px; background: #000; color: #fff; display: flex; padding-left: 36px; }
.face { width: 66px; height: 74px; margin-top: 8px; }
.brand { font: 700 53px/80px "DejaVu Serif", serif; letter-spacing: 1.500px; margin: -2px 0 0 9px; width: 2238px; }
.alerts { width: 80px; height: 80px; background: #e21818; text-align: center; font-weight: 700; font-size: 40px; line-height: 76px; }
.search { width: 540px; height: 48px; margin: 12px 0 0 22px; border-radius: 8px; background: #fff; box-shadow: inset 0 0 6px 3px #ddd; color: #6e6e6e; display: flex; align-items: center; gap: 4px; padding: 0 0 3px 5px; }
.search svg { width: 34px; height: 34px; margin-top: 2px; }
.hhelp { width: 32px; height: 32px; margin: 20px 0 0 8px; }
.admin { width: 126px; margin: 26px 0 0 52px; line-height: 32px; }
.logout { line-height: 32px; margin-top: 26px; white-space: nowrap; }
.logout i { font-weight: 400; margin-right: 8px; }
.crumbs { height: 56px; background: #f6faf2; border-bottom: 2px solid #d0d3cb; display: flex; align-items: center; padding-left: 36px; color: #4d4d4d; }
.crumbs i { width: 9px; height: 16px; background: #b5b8b2; clip-path: polygon(0 0, 100% 50%, 0 100%); margin: 2px 34px 0 43px; }
.crumbs .refresh { font-size: 18px; margin: 0 56px 0 auto; text-decoration-thickness: 1px; }

.body { display: flex; }
.side { width: 750px; padding: 23px 0 0 30px; }
.tasks li { height: 64px; display: flex; align-items: center; padding: 3px 0 0 4px; color: #204a87; }
.tasks li.seen { color: #5c3566; }
.tasks li.cur { font-weight: 700; }
.tasks svg { width: 48px; height: 48px; margin: 2px 12px 0 0; }
.history { width: 660px; margin-top: 47px; border: 2px solid #eee; border-radius: 8px; background: #fff; overflow: hidden; }
.hhead { height: 73px; background: #eee; display: flex; align-items: center; padding: 0 0 5px 30px; }
.hhead b { margin-left: 28px; width: 410px; }
.hhead a { font-weight: 700; }
.hhead i { width: 26px; height: 10px; border: 2px solid #4a76b3; background: #a9c3e6; border-radius: 2px; margin: 4px 0 0 9px; }
.find { width: 614px; height: 53px; margin: 20px 0 0 21px; border: 1.500px solid #bbb; display: flex; align-items: center; justify-content: space-between; padding: 0 11px 3px 14px; color: #757575; }
.find em { font-size: 26px; color: #8a8a8a; }
.builds { margin-top: 17px; font-size: 24px; color: #666; }
.builds li { height: 66.400px; display: flex; padding: 0 0 0 14px; line-height: 49px; }
.builds li:nth-child(odd) { background: #fbfbfb; }
.builds svg { width: 28px; height: 28px; margin-top: 11px; }
.builds b { color: #000; width: 120px; margin-left: 10px; text-decoration: underline; text-decoration-thickness: 2px; text-underline-offset: 3px; }
.hfoot { height: 75px; background: #eee; margin-top: 14px; display: flex; align-items: center; justify-content: flex-end; padding: 0 30px 2px 0; }
.hfoot svg { width: 32px; height: 32px; margin: 2px 8px 0 8px; }

.content { width: 2610px; }
.intro { display: flex; justify-content: space-between; height: 335px; }
h1 { font-size: 56px; line-height: 64px; margin: 51px 0 0; }
.titles p { margin: 31px 0 0; line-height: 32px; }
.actions { padding: 185px 30px 0 0; display: flex; flex-direction: column; align-items: flex-end; }
.adddesc { display: flex; align-items: center; height: 34px; }
.adddesc svg { width: 32px; height: 32px; margin-top: 2px; }
.disable { width: 257px; height: 64px; margin: 16px 5px 0 0; background: #4b758b; border: 2px solid #5488a2; color: #eee; font: 700 24px "Liberation Sans", Arial, sans-serif; padding: 0 0 4px; }
.recent { display: flex; align-items: center; height: 96px; padding: 2px 0 0 37px; }
.recent svg { width: 96px; height: 96px; margin: 4px 5px 0 0; }
h2 { font-size: 42px; line-height: 48px; margin: 67px 0 0; }

/* stage view */
.stages { display: flex; margin-top: 33px; }
.runs { width: 476px; }
.avglabel { position: relative; z-index: 1; height: 243px; padding: 152px 28px 0 0; text-align: right; font-weight: 700; line-height: 39.400px; color: #bbb; white-space: nowrap; }
.run { position: relative; height: 167.250px; margin-bottom: 3px; border: 2px solid #e6e6e6; border-right: 0; border-bottom-color: #eee; background: #fff; display: flex; padding: 40px 0 0 44px; font-size: 22px; }
.run.first { background: linear-gradient(#fff 0, #fff 8px, #e0e0e0 34px, #d0d0d0 36px, #fff 36px); }
.run.hover { background: #f1f1f1; }
.run.bad { background: #ffe9e4; }
.num { position: absolute; left: 11px; top: 18px; width: 77px; height: 34px; border-radius: 17px; background: #8aaed3; color: #fff; text-align: center; line-height: 29px; text-decoration: underline; text-decoration-thickness: 1.500px; text-underline-offset: 3px; text-shadow: 0 -1px 4px rgba(0,0,0,.5); }
.bad .num { background: #d9534f; }
.date { width: 110px; height: 106px; border: 2px solid #a8ccbc; background: linear-gradient(#efefef 50%, #fff 50%); box-shadow: 0 3px 6px rgba(0,0,0,.2); color: #333; text-align: center; }
.date span { display: block; line-height: 51px; margin-top: -2px; text-shadow: 0 2px 3px #fff; }
.date span:first-child { margin-top: -1px; line-height: 52px; }
.chg { width: 110px; height: 105px; border-radius: 0 10px 10px 0; background: rgba(0,0,0,.1); box-shadow: inset 0 2px 4px rgba(0,0,0,.18), inset -1px 0 2px rgba(0,0,0,.1); color: #999; text-align: center; line-height: 30px; padding-top: 4px; text-shadow: 0 2px 3px rgba(255,255,255,.9); }
.bad .chg { background: #e6d2cf; }
.bad .chg.commits { background: #a09190; color: #fff; line-height: 39px; padding-top: 8px; text-shadow: none; }

.grid { width: 524px; border: 2px solid #ccc; display: grid; grid-template-columns: 260px 260px; box-shadow: 0 6px 14px rgba(0,0,0,.3); background: #e9e9e9; padding-bottom: 3px; }
.th { height: 139px; background: #fff; border-bottom: 3px solid #e2e2e2; display: grid; place-items: center; text-align: center; font-weight: 700; line-height: 39.400px; padding-bottom: 2px; }
.th.alt { background: #f7f7f7; border-right: 2px solid #eee; border-bottom-color: #d9d9d9; }
.avg { height: 101px; background: linear-gradient(#f1f1f1 75px, #d3d3d3 101px); text-align: center; padding-top: 13px; line-height: 34px; text-shadow: 0 2px 3px #fff; }
.avg.alt { background: linear-gradient(#e9e9e9 75px, #cbcbcb 101px); border-right: 2px solid #eee; }
.avg i { display: block; width: 230px; height: 10px; margin: 10px 0 0 11px; background: #d6d6d6; box-shadow: inset 0 1px 3px rgba(0,0,0,.3), 0 2px 3px rgba(0,0,0,.12); }
.avg s { display: block; height: 10px; background: linear-gradient(#87add8, #6f9cd2 50%, #3f6fc4 60%, #5b93dd); }
.td { height: 170.250px; border-top: 4px solid #efefef; padding: 3px 4px 0; background: #e2ffe2; }
.td.alt { border-right: 2px solid #eee; padding-right: 2px; background: #ddf8dd; border-top-color: #e6e6e6; }
.td.hov { background: #d8f3d8; border-top-color: #e0e0e0; }
.td.hov.alt { background: #d1ebd1; }
.td.ko { background: #ffe9e4; }
.td.ko.alt { background: #f9e2dd; }
.td > div { position: relative; height: 162px; border: 2px solid #d2dad2; border-radius: 10px; text-align: center; font-size: 42px; line-height: 147px; color: #333; text-shadow: 0 3px 3px #fff; }
.td.alt > div { font-size: 28px; line-height: 149px; color: #8a978a; text-shadow: 0 2px 3px rgba(255,255,255,.8); }
.td.ko.alt > div { color: #8d8583; border-color: #d8d6d4; }
.td.fail > div { border-color: #d9534f; color: #d9534f; font-weight: 700; font-size: 39px; line-height: 147px; box-shadow: 0 3px 5px rgba(217,83,79,.7); background: repeating-linear-gradient(135deg, #ffc4c4 0, #ffc4c4 6px, #ffd6cc 6px, #ffd6cc 46.800px, #ffc4c4 46.800px, #ffc4c4 81.300px); }
.td em { position: absolute; right: 2px; bottom: 8px; font-size: 21.500px; line-height: 28px; }
```
